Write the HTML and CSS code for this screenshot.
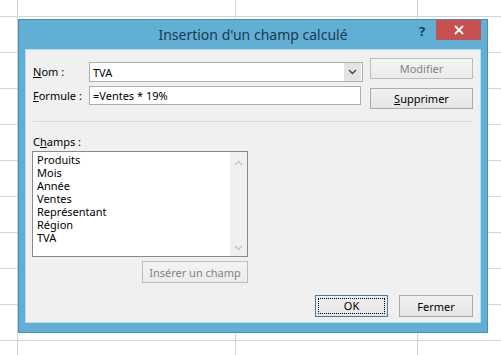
FILE: index.html
```html
<!DOCTYPE html>
<html lang="fr">
<head>
    <meta charset="UTF-8">
    <meta name="viewport" content="width=device-width, initial-scale=1.0">
    <title>Insertion d'un champ calculé</title>
    <link rel="stylesheet" href="styles.css">
</head>
<body>
    <div class="dialog">
        <div class="titlebar">
            <div class="spacer"></div>
            <div class="title">Insertion d'un champ calculé</div>
            <div class="help">?</div>
            <div class="close">
                <svg width="10" height="10" viewBox="0 0 10 10">
                    <path d="M1 1 L9 9 M9 1 L1 9" stroke="#fff" stroke-width="1.8" fill="none"/>
                </svg>
            </div>
        </div>

        <div class="content">
            <div class="top">
                <div class="fields">
                    <div class="row">
                        <label class="label"><u>N</u>om :</label>
                        <div class="combo">
                            <span class="value">TVA</span>
                            <span class="drop">
                                <svg width="9" height="6" viewBox="0 0 9 6">
                                    <path d="M1 1 L4.5 4.5 L8 1" stroke="#444" stroke-width="1.4" fill="none"/>
                                </svg>
                            </span>
                        </div>
                    </div>
                    <div class="row">
                        <label class="label"><u>F</u>ormule :</label>
                        <div class="input">=Ventes * 19%</div>
                    </div>
                </div>
                <div class="side">
                    <button class="btn disabled">Modifier</button>
                    <button class="btn"><u>S</u>upprimer</button>
                </div>
            </div>

            <div class="sep"></div>

            <div class="fieldlist">
                <div class="label">C<u>h</u>amps :</div>
                <div class="listbox">
                    <ul class="items">
                        <li>Produits</li>
                        <li>Mois</li>
                        <li>Année</li>
                        <li>Ventes</li>
                        <li>Représentant</li>
                        <li>Région</li>
                        <li>TVA</li>
                    </ul>
                    <div class="scroll">
                        <svg width="9" height="6" viewBox="0 0 9 6">
                            <path d="M1 5 L4.5 1.5 L8 5" stroke="#c4c4c4" stroke-width="1.4" fill="none"/>
                        </svg>
                        <svg width="9" height="6" viewBox="0 0 9 6">
                            <path d="M1 1 L4.5 4.5 L8 1" stroke="#c4c4c4" stroke-width="1.4" fill="none"/>
                        </svg>
                    </div>
                </div>
                <button class="btn disabled insert">Insérer un champ</button>
            </div>

            <div class="footer">
                <button class="btn ok"><span class="focus">OK</span></button>
                <button class="btn close-btn">Fermer</button>
            </div>
        </div>
    </div>
</body>
</html>
```

FILE: styles.css
```css
html, body {
    margin: 0;
    height: 355px;
}
body {
    font-family: "Noto Sans", "Open Sans", sans-serif;
    font-size: 11px;
    color: #000;
    background-color: #fff;
    background-image:
        linear-gradient(to right, transparent 17px, #d4d4d4 17px 18px, transparent 18px 235px, #d4d4d4 235px 236px, transparent 236px 417px, #d4d4d4 417px 418px, transparent 418px),
        repeating-linear-gradient(to bottom, transparent 0 16px, #d4d4d4 16px 17px, transparent 17px 36px);
    overflow: hidden;
    padding-top: 19px;
    box-sizing: border-box;
}
.dialog {
    margin-left: 18px;
    width: 470px;
    height: 314px;
    box-sizing: border-box;
    border: 1px solid #4a8db5;
    background-color: #62afd5;
    padding: 0 6px 9px 6px;
    display: flex;
    flex-direction: column;
}
.titlebar {
    height: 29px;
    display: flex;
    align-items: flex-start;
}
.spacer {
    width: 70px;
}
.title {
    flex: 1;
    text-align: center;
    font-size: 14px;
    line-height: 29px;
    color: #1e3a4c;
}
.help {
    width: 22px;
    margin-right: 3px;
    text-align: center;
    font-weight: bold;
    font-size: 13px;
    line-height: 22px;
    color: #1a3a52;
}
.close {
    width: 45px;
    height: 20px;
    background-color: #c75050;
    display: flex;
    align-items: center;
    justify-content: center;
}
.content {
    flex: 1;
    background-color: #f0f0f0;
    padding: 9px 8px 0 8px;
    box-shadow: inset 0 0 0 1px #b9dced;
}
.top {
    display: flex;
    justify-content: space-between;
}
.fields {
    padding-top: 4px;
}
.row {
    display: flex;
    align-items: center;
    margin-bottom: 4px;
}
.label {
    width: 56px;
    line-height: 16px;
}
u {
    text-underline-offset: 1px;
}
.combo, .input {
    width: 274px;
    height: 20px;
    box-sizing: border-box;
    border: 1px solid #abadb3;
    background-color: #fff;
    display: flex;
    align-items: center;
    padding-left: 3px;
}
.input {
    width: 272px;
    height: 19px;
}
.combo .value {
    flex: 1;
}
.drop {
    width: 17px;
    height: 18px;
    background-color: #e4e4e4;
    display: flex;
    align-items: center;
    justify-content: center;
    margin-right: 1px;
}
.side {
    display: flex;
    flex-direction: column;
    gap: 9px;
}
.btn {
    font-family: inherit;
    font-size: 11px;
    color: #000;
    width: 103px;
    height: 21px;
    padding: 0;
    border: 1px solid #acacac;
    background: linear-gradient(#f0f0f0, #e5e5e5);
    box-sizing: border-box;
}
.btn.disabled {
    color: #838383;
    border-color: #bdbdbd;
    background: linear-gradient(#f4f4f4, #ebebeb);
}
.sep {
    height: 1px;
    background-color: #d7d7d7;
    margin: 12px 0 12px 0;
}
.fieldlist {
    width: 216px;
    margin-left: -1px;
    display: flex;
    flex-direction: column;
}
.fieldlist .label {
    width: auto;
    margin-left: 1px;
    margin-bottom: 1px;
}
.listbox {
    height: 106px;
    box-sizing: border-box;
    border: 1px solid #8a8a8a;
    background-color: #fff;
    display: flex;
}
.items {
    flex: 1;
    list-style: none;
    margin: 0;
    padding: 1px 0 0 4px;
}
.items li {
    line-height: 13px;
}
.scroll {
    width: 17px;
    background-color: #f0f0f0;
    display: flex;
    flex-direction: column;
    justify-content: space-between;
    align-items: center;
    padding: 8px 0 5px 0;
}
.insert {
    align-self: flex-end;
    width: 106px;
    height: 22px;
    margin-top: 4px;
}
.footer {
    display: flex;
    justify-content: flex-end;
    gap: 11px;
    margin-top: 12px;
}
.ok {
    width: 73px;
    height: 22px;
    border-color: #3c7fb1;
    padding: 2px;
}
.focus {
    display: block;
    height: 100%;
    box-sizing: border-box;
    border: 1px dotted #000;
    line-height: 14px;
}
.close-btn {
    width: 74px;
    height: 22px;
}
```
